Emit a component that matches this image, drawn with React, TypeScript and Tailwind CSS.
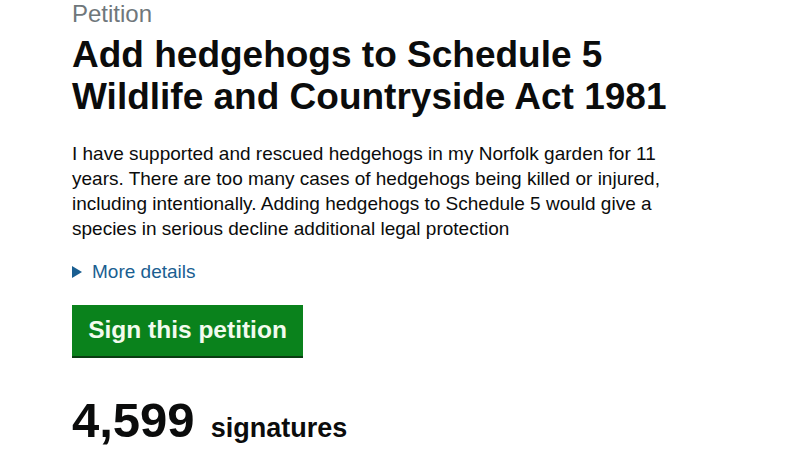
export default function App() {
  return (
    <div className="w-[800px] h-[450px] overflow-hidden bg-white font-['Liberation_Sans',Arial,sans-serif] text-[#0b0c0c]">
      <div className="pl-[72px] pr-[60px]">
        <p className="text-[24px] leading-[28px] text-[#6f777b]">Petition</p>
        <h1 className="mt-[6px] text-[37px] leading-[42px] font-bold">
          Add hedgehogs to Schedule 5<br />Wildlife and Countryside Act 1981
        </h1>
        <p className="mt-[23px] text-[19px] leading-[25px] w-[640px]">
          I have supported and rescued hedgehogs in my Norfolk garden for 11 years. There are too many cases of hedgehogs being killed or injured, including intentionally. Adding hedgehogs to Schedule 5 would give a species in serious decline additional legal protection
        </p>
        <div className="mt-[18px] flex items-center gap-[10px] text-[19px] leading-[25px] text-[#1a5e91]">
          <span className="w-0 h-0 border-y-[6px] border-y-transparent border-l-[10px] border-l-[#1a5e91]" />
          <span>More details</span>
        </div>
        <button className="mt-[21px] w-[231px] h-[51px] bg-[#0a821c] shadow-[0_2px_0_#0a3d12] text-[#f2fbee] text-[24.5px] font-bold">
          Sign this petition
        </button>
        <div className="mt-[38px] flex items-baseline gap-[16px] font-bold">
          <span className="text-[49px] leading-[52px]">4,599</span>
          <span className="text-[27px]">signatures</span>
        </div>
      </div>
    </div>
  );
}
